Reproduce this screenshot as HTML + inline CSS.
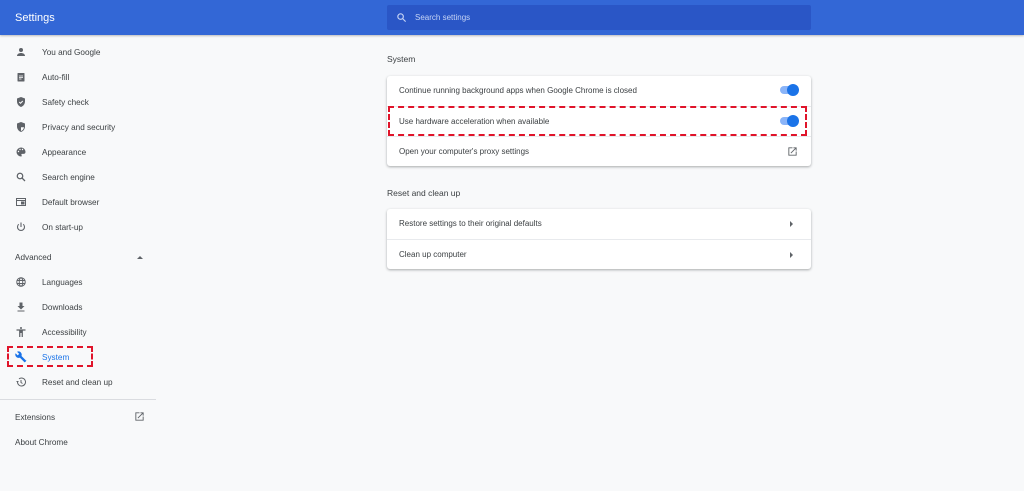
<!DOCTYPE html>
<html><head><style>
*{margin:0;padding:0;box-sizing:border-box}
body{width:1024px;height:491px;background:#f8f9fa;font-family:"Liberation Sans",sans-serif;position:relative;overflow:hidden;color:#333}
.hdr{position:absolute;left:0;top:0;width:1024px;height:35px;background:#3367d6;box-shadow:0 1px 2px rgba(0,0,0,.25)}
.hdr .t{position:absolute;left:15px;top:12px;color:#fff;font-size:11px}
.srch{position:absolute;left:387px;top:5px;width:424px;height:25px;background:#2a56c6;border-radius:2px}
.srch span{position:absolute;left:28px;top:8px;color:#c6d4f5;font-size:8px}
.nav{position:absolute;font-size:8.2px;color:#3c4043}
.ic{position:absolute;left:15px;width:12px;height:12px}
.lbl{position:absolute;left:42px;margin-top:1px}
.card{position:absolute;left:387px;width:424px;background:#fff;border-radius:3px;box-shadow:0 1px 2px rgba(60,64,67,.3),0 1px 3px rgba(60,64,67,.15)}
.row{position:relative;height:30px;border-top:1px solid #e8eaed;font-size:8px;color:#3c4043;padding:10px 0 0 12px}
.row:first-child{border-top:none}
.tg{position:absolute;right:14px;top:10px;width:17px;height:8px;border-radius:4px;background:#8ab4f8}
.tg:after{content:"";position:absolute;right:-2px;top:-2px;width:12px;height:12px;border-radius:50%;background:#1a73e8}
.arr{position:absolute;right:18px;top:12px;width:0;height:0;border-left:3px solid #5f6368;border-top:3px solid transparent;border-bottom:3px solid transparent}
.sec{position:absolute;left:387px;font-size:8.5px;color:#3c4043}
.nav>div[style*="left:15px"]{margin-top:1px}
</style></head><body>
<div class="hdr"><div class="t">Settings</div>
<div class="srch"><svg style="position:absolute;left:9px;top:7px" width="11" height="11" viewBox="0 0 24 24"><circle cx="10" cy="10" r="6" fill="none" stroke="#c6d4f5" stroke-width="2.5"/><path d="M14.5 14.5L21 21" stroke="#c6d4f5" stroke-width="2.5"/></svg><span>Search settings</span></div></div>

<div class="nav" style="left:0;top:0;width:160px;height:491px">
<svg class="ic" style="top:46px" viewBox="0 0 24 24"><circle cx="12" cy="8" r="4" fill="#5f6368"/><path d="M4 20c0-4 4-6 8-6s8 2 8 6z" fill="#5f6368"/></svg><div class="lbl" style="top:47px">You and Google</div>
<svg class="ic" style="top:71px" viewBox="0 0 24 24"><rect x="5" y="4" width="14" height="17" rx="1" fill="#5f6368"/><path d="M8 10h8M8 13h8M8 16h5" stroke="#fff" stroke-width="1.5"/></svg><div class="lbl" style="top:72px">Auto-fill</div>
<svg class="ic" style="top:96px" viewBox="0 0 24 24"><path d="M12 2L4 5v6c0 5 3.5 9.5 8 11 4.5-1.5 8-6 8-11V5z" fill="#5f6368"/><path d="M8.5 12l2.5 2.5 4.5-4.5" stroke="#fff" stroke-width="2" fill="none"/></svg><div class="lbl" style="top:97px">Safety check</div>
<svg class="ic" style="top:121px" viewBox="0 0 24 24"><path d="M12 2L4 5v6c0 5 3.5 9.5 8 11 4.5-1.5 8-6 8-11V5z" fill="#5f6368"/><path d="M12 4.5v8H18c-.5 3.5-3 6.5-6 7.5z" fill="#fff"/></svg><div class="lbl" style="top:122px">Privacy and security</div>
<svg class="ic" style="top:146px" viewBox="0 0 24 24"><path d="M12 3a9 9 0 000 18c1 0 1.5-.7 1.5-1.5 0-1-.8-1.3-.8-2.2 0-1 .8-1.5 1.8-1.5H17a4 4 0 004-4c0-4.5-4-8.8-9-8.8z" fill="#5f6368"/><circle cx="7" cy="11" r="1.4" fill="#fff"/><circle cx="10" cy="7" r="1.4" fill="#fff"/><circle cx="15" cy="7" r="1.4" fill="#fff"/></svg><div class="lbl" style="top:147px">Appearance</div>
<svg class="ic" style="top:171px" viewBox="0 0 24 24"><circle cx="10" cy="10" r="5.5" fill="none" stroke="#5f6368" stroke-width="2.5"/><path d="M14 14l6 6" stroke="#5f6368" stroke-width="2.5"/></svg><div class="lbl" style="top:172px">Search engine</div>
<svg class="ic" style="top:196px" viewBox="0 0 24 24"><rect x="3" y="5" width="18" height="14" fill="none" stroke="#5f6368" stroke-width="2"/><path d="M3 9h18M13 12h5v4h-5z" stroke="#5f6368" stroke-width="2" fill="#5f6368"/></svg><div class="lbl" style="top:197px">Default browser</div>
<svg class="ic" style="top:221px" viewBox="0 0 24 24"><path d="M12 3v9" stroke="#5f6368" stroke-width="2.2"/><path d="M7.5 6.5a7 7 0 109 0" stroke="#5f6368" stroke-width="2.2" fill="none"/></svg><div class="lbl" style="top:222px">On start-up</div>
<div style="position:absolute;left:15px;top:252px">Advanced</div>
<div style="position:absolute;left:137px;top:256px;border-bottom:3px solid #5f6368;border-left:3px solid transparent;border-right:3px solid transparent"></div>
<svg class="ic" style="top:276px" viewBox="0 0 24 24"><circle cx="12" cy="12" r="8.5" fill="none" stroke="#5f6368" stroke-width="2"/><ellipse cx="12" cy="12" rx="3.5" ry="8.5" fill="none" stroke="#5f6368" stroke-width="2"/><path d="M3.5 9h17M3.5 15h17" stroke="#5f6368" stroke-width="2"/></svg><div class="lbl" style="top:277px">Languages</div>
<svg class="ic" style="top:301px" viewBox="0 0 24 24"><path d="M9 3h6v7h4l-7 7-7-7h4z" fill="#5f6368"/><path d="M5 20h14" stroke="#5f6368" stroke-width="2"/></svg><div class="lbl" style="top:302px">Downloads</div>
<svg class="ic" style="top:326px" viewBox="0 0 24 24"><circle cx="12" cy="4" r="2" fill="#5f6368"/><path d="M3 8h18M12 8v6M9.5 8v14M14.5 8v14" stroke="#5f6368" stroke-width="2.5"/></svg><div class="lbl" style="top:327px">Accessibility</div>
<svg class="ic" style="top:351px" viewBox="0 0 24 24"><path d="M22 19l-9-9c1-2.5.5-5.3-1.5-7.3-2-2-5-2.4-7.4-1.3L8.4 5.7 5.4 8.7 1.1 4.4C0 6.8.5 9.8 2.5 11.8c2 2 4.8 2.5 7.2 1.5l9 9c.4.4 1 .4 1.4 0l2.3-2.3c.5-.4.5-1 .1-1z" fill="#1a73e8"/></svg><div class="lbl" style="top:352px;color:#1a73e8">System</div>
<div style="position:absolute;left:7px;top:346px;width:86px;height:21px;border:2px dashed #e0142a"></div>
<svg class="ic" style="top:376px" viewBox="0 0 24 24"><path d="M5 12a8 8 0 103-6.2" stroke="#5f6368" stroke-width="2" fill="none"/><path d="M2 10l3 3 3-3" fill="#5f6368"/><path d="M12 8v5l3 2" stroke="#5f6368" stroke-width="2" fill="none"/></svg><div class="lbl" style="top:377px">Reset and clean up</div>
<div style="position:absolute;left:0;top:399px;width:156px;border-top:1px solid #dadce0"></div>
<div style="position:absolute;left:15px;top:412px">Extensions</div>
<svg style="position:absolute;left:134px;top:411px" width="11" height="11" viewBox="0 0 24 24"><path d="M19 19H5V5h7V3H3v18h18v-9h-2zM14 3v2h3.6l-9.8 9.8 1.4 1.4L19 6.4V10h2V3z" fill="#5f6368"/></svg>
<div style="position:absolute;left:15px;top:437px">About Chrome</div>
</div>

<div class="sec" style="top:54px">System</div>
<div class="card" style="top:76px;height:90px">
<div class="row">Continue running background apps when Google Chrome is closed<div class="tg"></div></div>
<div class="row">Use hardware acceleration when available<div class="tg"></div></div>
<div class="row">Open your computer's proxy settings<svg style="position:absolute;right:13px;top:9px" width="11" height="11" viewBox="0 0 24 24"><path d="M19 19H5V5h7V3H3v18h18v-9h-2zM14 3v2h3.6l-9.8 9.8 1.4 1.4L19 6.4V10h2V3z" fill="#5f6368"/></svg></div>
</div>
<div style="position:absolute;left:388px;top:106px;width:419px;height:30px;border:2px dashed #e0142a"></div>
<div class="sec" style="top:188px">Reset and clean up</div>
<div class="card" style="top:209px;height:60px">
<div class="row">Restore settings to their original defaults<div class="arr"></div></div>
<div class="row">Clean up computer<div class="arr"></div></div>
</div>
</body></html>
